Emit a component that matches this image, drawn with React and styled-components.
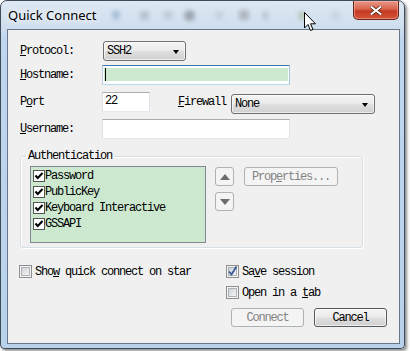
import React from 'react';
import styled, { createGlobalStyle } from 'styled-components';

const GlobalStyle = createGlobalStyle`
  html, body {
    margin: 0;
    padding: 0;
    background: #ffffff;
  }
  body {
    width: 410px;
    height: 351px;
    overflow: hidden;
  }
`;

const mono = `"Liberation Mono", "DejaVu Sans Mono", monospace`;

// window chrome
const Window = styled.div`
  position: relative;
  box-sizing: border-box;
  width: 405px;
  height: 349px;
  display: flex;
  flex-direction: column;
  padding: 0 4px 4px 6px;
  border: 1px solid #414b57;
  border-radius: 7px 7px 4px 4px;
  background: linear-gradient(180deg, #dde8f3 0px, #cfdeee 27px, #bed6ee 40px, #b9d2ec 100%);
  box-shadow: 2px 2px 3px rgba(0, 0, 0, 0.45);
`;

const TitleBar = styled.div`
  height: 28px;
  display: flex;
  align-items: flex-start;
`;

const Title = styled.div`
  width: 92px;
  flex: none;
  margin-top: 5px;
  padding-left: 1px;
  font: 13px/18px "Noto Sans", "Open Sans", sans-serif;
  color: #000;
  text-shadow: 0 0 6px rgba(255, 255, 255, 0.95), 0 0 10px rgba(255, 255, 255, 0.8);
  white-space: nowrap;
`;

const Glass = styled.div`
  display: flex;
  align-items: center;
  height: 28px;
  filter: blur(2px);
`;

const Blob = styled.span`
  display: block;
  flex: none;
  width: ${(p) => p.$w}px;
  height: ${(p) => p.$h}px;
  margin-left: ${(p) => p.$ml}px;
  border-radius: ${(p) => (p.$round ? '50%' : '2px')};
  background: ${(p) => p.$c};
  opacity: 0.55;
`;

const CloseButton = styled.div`
  margin-left: auto;
  margin-right: 1px;
  box-sizing: border-box;
  width: 46px;
  height: 19px;
  display: flex;
  align-items: center;
  justify-content: center;
  border: 1px solid #6b2218;
  border-top: none;
  border-radius: 0 0 5px 5px;
  background: linear-gradient(180deg, #e8998a 0%, #d9634c 45%, #c53a22 55%, #d2553a 100%);
  box-shadow: inset 0 0 0 1px rgba(255, 200, 190, 0.45);
`;

const Client = styled.div`
  flex: 1;
  display: flex;
  flex-direction: column;
  padding: 0 12px 0 12px;
  border: 1px solid #66778c;
  background: #f0f0f0;
  font-family: ${mono};
  font-size: 12px;
  letter-spacing: -1.2px;
  color: #000;
`;

// form rows
const Row = styled.div`
  display: flex;
  align-items: center;
  height: 20px;
  margin-top: ${(p) => p.$mt}px;
`;

const Label = styled.span`
  flex: none;
  width: ${(p) => p.$w}px;
  margin-left: ${(p) => p.$ml || 0}px;
  white-space: nowrap;
  line-height: 12px;
`;

const Combo = styled.div`
  box-sizing: border-box;
  flex: none;
  width: ${(p) => p.$w}px;
  height: 20px;
  margin-left: ${(p) => p.$ml || 0}px;
  align-self: ${(p) => (p.$drop ? 'flex-start' : 'center')};
  margin-top: ${(p) => (p.$drop ? 2 : 0)}px;
  display: flex;
  align-items: center;
  justify-content: space-between;
  padding: 0 6px 0 3px;
  border: 1px solid #707070;
  border-radius: 3px;
  background: linear-gradient(180deg, #f4f4f4 0%, #ececec 45%, #dedede 55%, #d0d0d0 100%);
  box-shadow: inset 0 0 0 1px rgba(255, 255, 255, 0.6);
`;

const Arrow = styled.span`
  width: 0;
  height: 0;
  border-left: 3.5px solid transparent;
  border-right: 3.5px solid transparent;
  border-top: 4px solid #000;
  margin-top: 1px;
`;

const TextBox = styled.div`
  box-sizing: border-box;
  flex: none;
  width: ${(p) => p.$w}px;
  height: 20px;
  display: flex;
  align-items: flex-start;
  padding: 1px 1px 0 1px;
  background: #fff;
  border: 1px solid;
  border-color: ${(p) =>
    p.$focus ? '#3d7bad #a4c9e3 #b7d9ed #b5cfe7' : '#abadb3 #e2e3ea #e3e9ef #dbdfe6'};
`;

const Highlight = styled.div`
  flex: 1;
  height: 13px;
  margin-top: 1px;
  background: #cce8cf;
  display: flex;
`;

const Caret = styled.span`
  width: 1px;
  height: 13px;
  margin-left: 1px;
  background: #000;
`;

const Value = styled.span`
  padding-left: 1px;
  line-height: 12px;
  margin-top: 1px;
`;

// authentication group
const Group = styled.fieldset`
  box-sizing: border-box;
  width: 343px;
  margin: 11px 0 0 0;
  padding: 4px 9px 4px 9px;
  border: 1px solid #d5dfe5;
  border-radius: 3px;
  box-shadow: inset 1px 1px 0 #fff, 1px 1px 0 #fff;
  display: flex;
  align-items: flex-start;
`;

const Legend = styled.legend`
  margin-left: -4px;
  padding: 0 2px;
  line-height: 12px;
`;

const ListBox = styled.div`
  box-sizing: border-box;
  flex: none;
  width: 176px;
  height: 77px;
  padding: 1px 0 0 2px;
  border: 1px solid #828790;
  background: #cce8cf;
`;

const ListItem = styled.div`
  display: flex;
  align-items: center;
  height: 16px;
  white-space: nowrap;
`;

const ArrowColumn = styled.div`
  display: flex;
  flex-direction: column;
  gap: 6px;
  margin: 1px 0 0 9px;
`;

const SmallButton = styled.div`
  box-sizing: border-box;
  width: 19px;
  height: 19px;
  display: flex;
  align-items: center;
  justify-content: center;
  border: 1px solid #adb2b5;
  border-radius: 3px;
  background: #f4f4f4;
`;

const Tri = styled.span`
  width: 0;
  height: 0;
  border-left: 5px solid transparent;
  border-right: 5px solid transparent;
  ${(p) => (p.$up ? 'border-bottom: 6px solid #6d6d6d;' : 'border-top: 6px solid #6d6d6d;')}
`;

const PushButton = styled.div`
  box-sizing: border-box;
  flex: none;
  width: ${(p) => p.$w}px;
  height: 19px;
  margin: ${(p) => p.$m || 0};
  display: flex;
  align-items: center;
  justify-content: center;
  border-radius: 3px;
  white-space: nowrap;
  line-height: 12px;
  border: 1px solid ${(p) => (p.$disabled ? '#adb2b5' : '#555a5e')};
  color: ${(p) => (p.$disabled ? '#838383' : '#000')};
  background: ${(p) =>
    p.$disabled
      ? '#f4f4f4'
      : 'linear-gradient(180deg, #f4f4f4 0%, #ececec 45%, #dedede 55%, #d0d0d0 100%)'};
  box-shadow: ${(p) => (p.$disabled ? 'none' : 'inset 0 0 0 1px rgba(255,255,255,0.65)')};
`;

// bottom options
const Options = styled.div`
  display: flex;
  margin-top: 17px;
  margin-left: -1px;
`;

const OptionColumn = styled.div`
  display: flex;
  flex-direction: column;
  gap: 8px;
  width: ${(p) => p.$w || 'auto'};
`;

const CheckRow = styled.label`
  display: flex;
  align-items: center;
  height: 13px;
  white-space: nowrap;
  line-height: 12px;
`;

const CheckText = styled.span`
  margin-left: 3px;
`;

const ButtonRow = styled.div`
  display: flex;
  justify-content: flex-end;
  gap: 10px;
  margin-top: 9px;
`;

const Cursor = styled.svg`
  position: absolute;
  left: 303px;
  top: 11px;
`;

const ListCheck = () => (
  <svg width="12" height="12" viewBox="0 0 12 12" style={{ flex: 'none' }}>
    <rect x="0.5" y="0.5" width="11" height="11" fill="#fff" stroke="#555" />
    <path d="M2.5 5.5 L4.8 8 L9.5 3" fill="none" stroke="#000" strokeWidth="2" />
  </svg>
);

const WinCheck = ({ checked }) => (
  <svg width="13" height="13" viewBox="0 0 13 13" style={{ flex: 'none' }}>
    <defs>
      <linearGradient id="wcg" x1="0" y1="0" x2="1" y2="1">
        <stop offset="0" stopColor="#cbcfd5" />
        <stop offset="1" stopColor="#f7f7f7" />
      </linearGradient>
    </defs>
    <rect x="0.5" y="0.5" width="12" height="12" fill="#f4f4f4" stroke="#8f8f8f" />
    <rect x="2.5" y="2.5" width="8" height="8" fill="url(#wcg)" stroke="#aeb3b9" />
    {checked && (
      <path d="M3 6.5 L5.5 9.5 L10.5 1.5" fill="none" stroke="#3b5a95" strokeWidth="1.8" />
    )}
  </svg>
);

const App = () => {
  const authItems = ['Password', 'PublicKey', 'Keyboard Interactive', 'GSSAPI'];

  return (
    <>
      <GlobalStyle />
      <Window>
        <TitleBar>
          <Title>Quick Connect</Title>
          <Glass>
            <Blob $w={8} $h={10} $ml={12} $c="#7f9fc4" $round />
            <Blob $w={9} $h={9} $ml={20} $c="#9aa7b4" />
            <Blob $w={8} $h={8} $ml={15} $c="#a9b4bf" />
            <Blob $w={11} $h={11} $ml={12} $c="#6f7780" $round />
            <Blob $w={8} $h={8} $ml={20} $c="#b8c3ce" />
            <Blob $w={10} $h={10} $ml={16} $c="#8d949b" />
            <Blob $w={5} $h={9} $ml={14} $c="#a0a9b2" />
            <Blob $w={8} $h={9} $ml={30} $c="#9fb28a" $round />
            <Blob $w={9} $h={9} $ml={25} $c="#c1c9d1" />
          </Glass>
          <CloseButton>
            <svg width="12" height="9" viewBox="0 0 12 9">
              <path d="M1.5 1 L10.5 8 M10.5 1 L1.5 8" stroke="#4a1a12" strokeWidth="3.4" strokeLinecap="square" />
              <path d="M1.5 1 L10.5 8 M10.5 1 L1.5 8" stroke="#fff" strokeWidth="2" strokeLinecap="square" />
            </svg>
          </CloseButton>
        </TitleBar>

        <Client>
          <Row $mt={11}>
            <Label $w={82}><u>P</u>rotocol:</Label>
            <Combo $w={83} $ml={1}>
              <span>SSH2</span>
              <Arrow />
            </Combo>
          </Row>

          <Row $mt={4}>
            <Label $w={82}><u>H</u>ostname:</Label>
            <TextBox $w={188} $focus>
              <Highlight>
                <Caret />
              </Highlight>
            </TextBox>
          </Row>

          <Row $mt={7}>
            <Label $w={82}>P<u>o</u>rt</Label>
            <TextBox $w={48}>
              <Value>22</Value>
            </TextBox>
            <Label $w={48} $ml={28}><u>F</u>irewall</Label>
            <Combo $w={144} $ml={5} $drop>
              <span>None</span>
              <Arrow />
            </Combo>
          </Row>

          <Row $mt={7}>
            <Label $w={82}><u>U</u>sername:</Label>
            <TextBox $w={188} />
          </Row>

          <Group>
            <Legend>Authentication</Legend>
            <ListBox>
              {authItems.map((item) => (
                <ListItem key={item}>
                  <ListCheck />
                  <span>{item}</span>
                </ListItem>
              ))}
            </ListBox>
            <ArrowColumn>
              <SmallButton>
                <Tri $up />
              </SmallButton>
              <SmallButton>
                <Tri />
              </SmallButton>
            </ArrowColumn>
            <PushButton $w={94} $m="1px 0 0 10px" $disabled>
              Prop<u>e</u>rties...
            </PushButton>
          </Group>

          <Options>
            <OptionColumn $w="207px">
              <CheckRow>
                <WinCheck />
                <CheckText>Sho<u>w</u> quick connect on star</CheckText>
              </CheckRow>
            </OptionColumn>
            <OptionColumn>
              <CheckRow>
                <WinCheck checked />
                <CheckText>Sa<u>v</u>e session</CheckText>
              </CheckRow>
              <CheckRow>
                <WinCheck />
                <CheckText>Open in a <u>t</u>ab</CheckText>
              </CheckRow>
            </OptionColumn>
          </Options>

          <ButtonRow>
            <PushButton $w={73} $disabled>Connect</PushButton>
            <PushButton $w={73}>Cancel</PushButton>
          </ButtonRow>
        </Client>

        <Cursor width="13" height="20" viewBox="0 0 13 20">
          <path
            d="M0.5 0.5 L0.5 16 L4 12.5 L6.5 18.5 L9 17.5 L6.5 11.8 L11.5 11.8 Z"
            fill="#fff"
            stroke="#000"
            strokeWidth="1"
            strokeLinejoin="miter"
          />
        </Cursor>
      </Window>
    </>
  );
};

export default App;
